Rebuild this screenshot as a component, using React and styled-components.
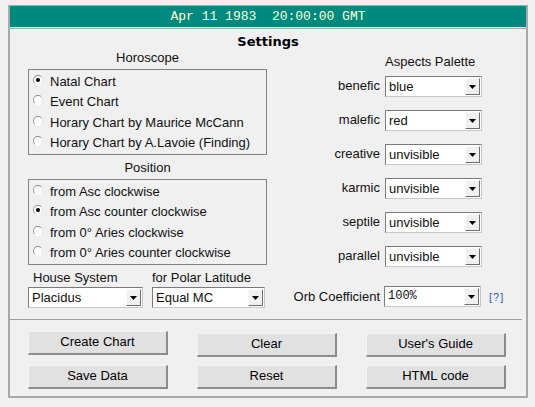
import React from "react";
import styled, { createGlobalStyle } from "styled-components";

const GlobalStyle = createGlobalStyle`
  body {
    margin: 0;
    background: #f0f0f0;
    font-family: "Liberation Sans", Arial, sans-serif;
    font-size: 13px;
    color: #111;
  }
`;

const horoscopes = [
  "Natal Chart",
  "Event Chart",
  "Horary Chart by Maurice McCann",
  "Horary Chart by A.Lavoie (Finding)",
];

const positions = [
  "from Asc clockwise",
  "from Asc counter clockwise",
  "from 0° Aries clockwise",
  "from 0° Aries counter clockwise",
];

const aspects = [
  { label: "benefic", value: "blue" },
  { label: "malefic", value: "red" },
  { label: "creative", value: "unvisible" },
  { label: "karmic", value: "unvisible" },
  { label: "septile", value: "unvisible" },
  { label: "parallel", value: "unvisible" },
];

const Dropdown = ({ value, width, mono }) => (
  <SelectBox $width={width}>
    <SelectValue $mono={mono}>{value}</SelectValue>
    <ArrowButton>
      <svg width="7" height="4" viewBox="0 0 7 4">
        <path d="M0 0 H7 L3.5 4 Z" fill="#000" />
      </svg>
    </ArrowButton>
  </SelectBox>
);

const RadioGroup = ({ items, checked }) => (
  <RadioBox>
    {items.map((item, i) => (
      <RadioRow key={item}>
        <Radio $checked={i === checked} />
        {item}
      </RadioRow>
    ))}
  </RadioBox>
);

const App = () => {
  return (
    <>
      <GlobalStyle />
      <Page>
        <Frame>
          <DateBar>Apr 11 1983&nbsp;&nbsp;20:00:00 GMT</DateBar>
          <Title>Settings</Title>
          <Main>
            <LeftColumn>
              <GroupLabel>Horoscope</GroupLabel>
              <RadioGroup items={horoscopes} checked={0} />
              <GroupLabel $top={5}>Position</GroupLabel>
              <RadioGroup items={positions} checked={1} />
              <HouseRow>
                <HouseField>
                  <FieldLabel>House System</FieldLabel>
                  <Dropdown value="Placidus" width={115} />
                </HouseField>
                <HouseField>
                  <FieldLabel $pad={0}>for Polar Latitude</FieldLabel>
                  <Dropdown value="Equal MC" width={113} />
                </HouseField>
              </HouseRow>
            </LeftColumn>
            <RightColumn>
              <PaletteTitle>Aspects Palette</PaletteTitle>
              {aspects.map((a) => (
                <React.Fragment key={a.label}>
                  <AspectLabel>{a.label}</AspectLabel>
                  <Dropdown value={a.value} width={97} />
                  <span />
                </React.Fragment>
              ))}
              <AspectLabel $orb>Orb Coefficient</AspectLabel>
              <OrbCell>
                <Dropdown value="100%" width={97} mono />
              </OrbCell>
              <HelpLink href="#">[?]</HelpLink>
            </RightColumn>
          </Main>
          <Divider />
          <Buttons>
            <Button $raised>Create Chart</Button>
            <Button>Clear</Button>
            <Button>User's Guide</Button>
            <Button>Save Data</Button>
            <Button>Reset</Button>
            <Button>HTML code</Button>
          </Buttons>
        </Frame>
      </Page>
    </>
  );
};

const Page = styled.div`
  padding: 5px 0 0 8px;
`;

const Frame = styled.div`
  width: 516px;
  border: 2px solid #a9a9a9;
  border-top-width: 1px;
  background: #f0f0f0;
`;

const DateBar = styled.div`
  height: 21px;
  line-height: 21px;
  background: #00897e;
  border-bottom: 1px solid #e8e8e8;
  box-shadow: 0 1px 0 #a9a9a9;
  color: #ffffd8;
  font-family: "Liberation Mono", "Courier New", monospace;
  font-size: 13px;
  text-align: center;
  white-space: pre;
`;

const Title = styled.div`
  margin-top: 6px;
  height: 16px;
  line-height: 16px;
  text-align: center;
  font-family: "DejaVu Sans", Verdana, sans-serif;
  font-weight: bold;
  font-size: 13px;
  color: #000;
`;

const Main = styled.div`
  display: flex;
  padding: 0 0 11px 18px;
`;

const LeftColumn = styled.div`
  width: 245px;
  display: flex;
  flex-direction: column;
`;

const GroupLabel = styled.div`
  width: 239px;
  margin-top: ${(p) => p.$top || 0}px;
  height: 16px;
  line-height: 16px;
  text-align: center;
  margin-bottom: 3px;
`;

const RadioBox = styled.div`
  width: 237px;
  padding: 1px 0;
  border: 1px solid #828282;
`;

const RadioRow = styled.div`
  display: flex;
  align-items: center;
  height: 20.5px;
  padding-left: 4px;
  white-space: nowrap;
`;

const Radio = styled.span`
  position: relative;
  width: 10px;
  height: 10px;
  margin-right: 7px;
  border-radius: 50%;
  background: #fff;
  border: 1px solid;
  border-color: #8a8a8a #e4e4e4 #ffffff #9a9a9a;
  box-sizing: border-box;
  flex-shrink: 0;
  margin-top: -3px;

  &::after {
    content: "";
    display: ${(p) => (p.$checked ? "block" : "none")};
    position: absolute;
    left: 2px;
    top: 2px;
    width: 4px;
    height: 4px;
    border-radius: 50%;
    background: #000;
  }
`;

const HouseRow = styled.div`
  display: flex;
  gap: 9px;
  margin-top: 5px;
`;

const HouseField = styled.div`
  display: flex;
  flex-direction: column;
  gap: 1px;
`;

const FieldLabel = styled.div`
  height: 16px;
  line-height: 16px;
  padding-left: ${(p) => (p.$pad === undefined ? 5 : p.$pad)}px;
  white-space: nowrap;
`;

const SelectBox = styled.div`
  display: flex;
  width: ${(p) => p.$width}px;
  height: 21px;
  box-sizing: border-box;
  background: #fff;
  border: 1px solid #7a7a7a;
  border-right-color: #c8c8c8;
  border-bottom-color: #c8c8c8;
`;

const SelectValue = styled.div`
  flex: 1;
  padding-left: 3px;
  line-height: 19px;
  font-family: ${(p) =>
    p.$mono
      ? `"Liberation Mono", "Courier New", monospace`
      : `"Liberation Sans", Arial, sans-serif`};
  font-size: ${(p) => (p.$mono ? "12px" : "13px")};
  white-space: nowrap;
  overflow: hidden;
`;

const ArrowButton = styled.div`
  width: 15px;
  margin: 1px;
  box-sizing: border-box;
  display: flex;
  align-items: center;
  justify-content: center;
  background: #f0f0f0;
  border: 1px solid;
  border-color: #fdfdfd #6e6e6e #6e6e6e #fdfdfd;
`;

const RightColumn = styled.div`
  display: grid;
  grid-template-columns: 90px 97px auto;
  column-gap: 5px;
  row-gap: 13px;
  align-items: center;
  padding-top: 4px;
  margin-left: 17px;
  align-content: start;
`;

const PaletteTitle = styled.div`
  grid-column: 2 / 4;
  height: 16px;
  line-height: 16px;
  margin-bottom: -7px;
  white-space: nowrap;
`;

const AspectLabel = styled.div`
  text-align: right;
  white-space: nowrap;
  margin-top: ${(p) => (p.$orb ? 6 : -3)}px;
`;

const OrbCell = styled.div`
  margin-top: 6px;
  margin-left: -1px;
`;

const HelpLink = styled.a`
  margin-top: 6px;
  margin-left: 2px;
  color: #2f5fc0;
  font-size: 11px;
  text-decoration: none;
  letter-spacing: 1px;
`;

const Divider = styled.div`
  height: 1px;
  margin-right: 4px;
  background: #a0a0a0;
`;

const Buttons = styled.div`
  display: grid;
  grid-template-columns: repeat(3, 140px);
  column-gap: 29px;
  row-gap: 8px;
  padding: 13px 0 7px 18px;
`;

const Button = styled.div`
  height: 24px;
  box-sizing: border-box;
  line-height: 20px;
  text-align: center;
  background: #e1e1e1;
  border: 1px solid;
  border-width: 1px 2px 2px 1px;
  border-color: #f4f4f4 #8c8c8c #8c8c8c #f4f4f4;
  color: #000;
  margin-top: ${(p) => (p.$raised ? "-2px" : "0")};
  margin-bottom: ${(p) => (p.$raised ? "2px" : "0")};
`;

export default App;
